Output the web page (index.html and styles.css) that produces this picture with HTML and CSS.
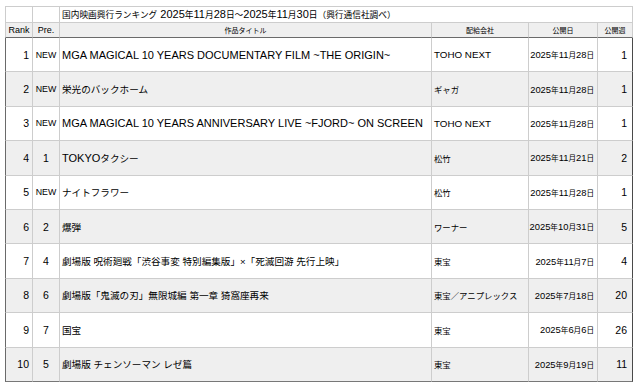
FILE: index.html
```html
<!DOCTYPE html>
<html lang="ja">
<head>
<meta charset="utf-8">
<title>国内映画興行ランキング</title>
<link rel="stylesheet" href="styles.css">
</head>
<body>
<div class="page">
<table class="rank-table">
  <colgroup>
    <col class="c-rank"><col class="c-pre"><col class="c-title"><col class="c-dist"><col class="c-date"><col class="c-week">
  </colgroup>
  <thead>
    <tr class="caption-row">
      <td></td><td></td>
      <td colspan="4" class="caption"><span class="j">国内映画興行ランキング</span> 2025<span class="j">年</span>11<span class="j">月</span>28<span class="j">日〜</span>2025<span class="j">年</span>11<span class="j">月</span>30<span class="j">日（興行通信社調べ）</span></td>
      <td></td>
    </tr>
    <tr class="head-row">
      <th>Rank</th><th>Pre.</th><th><span class="j">作品タイトル</span></th><th><span class="j">配給会社</span></th><th><span class="j">公開日</span></th><th><span class="j">公開週</span></th>
    </tr>
  </thead>
  <tbody>
    <tr>
      <td class="rank">1</td><td class="pre new">NEW</td>
      <td class="title">MGA MAGICAL 10 YEARS DOCUMENTARY FILM ~THE ORIGIN~</td>
      <td class="dist">TOHO NEXT</td>
      <td class="date">2025<span class="j">年</span>11<span class="j">月</span>28<span class="j">日</span></td>
      <td class="week">1</td>
    </tr>
    <tr>
      <td class="rank">2</td><td class="pre new">NEW</td>
      <td class="title"><span class="j">栄光のバックホーム</span></td>
      <td class="dist"><span class="j">ギャガ</span></td>
      <td class="date">2025<span class="j">年</span>11<span class="j">月</span>28<span class="j">日</span></td>
      <td class="week">1</td>
    </tr>
    <tr>
      <td class="rank">3</td><td class="pre new">NEW</td>
      <td class="title">MGA MAGICAL 10 YEARS ANNIVERSARY LIVE ~FJORD~ ON SCREEN</td>
      <td class="dist">TOHO NEXT</td>
      <td class="date">2025<span class="j">年</span>11<span class="j">月</span>28<span class="j">日</span></td>
      <td class="week">1</td>
    </tr>
    <tr>
      <td class="rank">4</td><td class="pre">1</td>
      <td class="title">TOKYO<span class="j">タクシー</span></td>
      <td class="dist"><span class="j">松竹</span></td>
      <td class="date">2025<span class="j">年</span>11<span class="j">月</span>21<span class="j">日</span></td>
      <td class="week">2</td>
    </tr>
    <tr>
      <td class="rank">5</td><td class="pre new">NEW</td>
      <td class="title"><span class="j">ナイトフラワー</span></td>
      <td class="dist"><span class="j">松竹</span></td>
      <td class="date">2025<span class="j">年</span>11<span class="j">月</span>28<span class="j">日</span></td>
      <td class="week">1</td>
    </tr>
    <tr>
      <td class="rank">6</td><td class="pre">2</td>
      <td class="title"><span class="j">爆弾</span></td>
      <td class="dist"><span class="j">ワーナー</span></td>
      <td class="date">2025<span class="j">年</span>10<span class="j">月</span>31<span class="j">日</span></td>
      <td class="week">5</td>
    </tr>
    <tr>
      <td class="rank">7</td><td class="pre">4</td>
      <td class="title"><span class="j">劇場版 呪術廻戦「渋谷事変 特別編集版」×「死滅回游 先行上映」</span></td>
      <td class="dist"><span class="j">東宝</span></td>
      <td class="date">2025<span class="j">年</span>11<span class="j">月</span>7<span class="j">日</span></td>
      <td class="week">4</td>
    </tr>
    <tr>
      <td class="rank">8</td><td class="pre">6</td>
      <td class="title"><span class="j">劇場版「鬼滅の刃」無限城編 第一章 猗窩座再来</span></td>
      <td class="dist"><span class="j">東宝／アニプレックス</span></td>
      <td class="date">2025<span class="j">年</span>7<span class="j">月</span>18<span class="j">日</span></td>
      <td class="week">20</td>
    </tr>
    <tr>
      <td class="rank">9</td><td class="pre">7</td>
      <td class="title"><span class="j">国宝</span></td>
      <td class="dist"><span class="j">東宝</span></td>
      <td class="date">2025<span class="j">年</span>6<span class="j">月</span>6<span class="j">日</span></td>
      <td class="week">26</td>
    </tr>
    <tr>
      <td class="rank">10</td><td class="pre">5</td>
      <td class="title"><span class="j">劇場版 チェンソーマン レゼ篇</span></td>
      <td class="dist"><span class="j">東宝</span></td>
      <td class="date">2025<span class="j">年</span>9<span class="j">月</span>19<span class="j">日</span></td>
      <td class="week">11</td>
    </tr>
  </tbody>
</table>
</div>
</body>
</html>
```
FILE: styles.css
```css
html, body {
  margin: 0;
  padding: 0;
  background: #ffffff;
}

body {
  font-family: "Liberation Sans", "Noto Sans CJK JP", sans-serif;
  color: #000000;
}

.page {
  padding: 6px 0 0 5px;
}

.rank-table {
  border-collapse: separate;
  border-spacing: 0;
  table-layout: fixed;
  width: 628px;
}

.c-rank { width: 28px; }
.c-pre { width: 27px; }
.c-title { width: 372px; }
.c-dist { width: 97px; }
.c-date { width: 69px; }
.c-week { width: 35px; }

.rank-table td,
.rank-table th {
  border-right: 1px solid #cdcdcd;
  border-bottom: 1px solid #cdcdcd;
  padding: 0;
  white-space: nowrap;
  overflow: hidden;
  vertical-align: middle;
}

.rank-table tr > :first-child {
  border-left: 1px solid #cdcdcd;
}

.caption-row td {
  border-top: 1px solid #cdcdcd;
  height: 15px;
  background: #ffffff;
}

.caption {
  font-size: 11px;
  padding-left: 2px !important;
  text-align: left;
}

.caption .j {
  font-size: 8.7px;
}

.head-row th {
  height: 14px;
  background: #efefef;
  font-weight: normal;
  font-size: 9px;
  text-align: center;
  border-bottom: 1px solid #6a6a6a;
}

.head-row th .j {
  font-size: 7px;
}

.rank-table tbody tr {
  height: 34.4px;
}

.rank-table tbody tr:nth-child(even) td {
  background: #efefef;
}

.rank-table tbody td:first-child {
  border-left: 1px solid #6a6a6a;
}

.rank-table tbody td:last-child {
  border-right: 1px solid #4a4a4a;
}

.rank-table tbody tr:last-child td {
  border-bottom: 1px solid #777777;
}

.rank {
  font-size: 10.5px;
  text-align: right;
  padding-right: 3px !important;
}

.pre {
  font-size: 10.5px;
  text-align: center;
}

.pre.new {
  font-size: 8.8px;
}

.title {
  font-size: 11px;
  padding-left: 2px !important;
}

.title .j {
  font-size: 9.6px;
}

.dist {
  font-size: 9.8px;
  padding-left: 2px !important;
}

.dist .j {
  font-size: 8.4px;
}

.date {
  font-size: 9.4px;
  text-align: right;
  padding-right: 3px !important;
}

.date .j {
  font-size: 7.6px;
}

.week {
  font-size: 10.5px;
  text-align: right;
  padding-right: 5px !important;
}
```
